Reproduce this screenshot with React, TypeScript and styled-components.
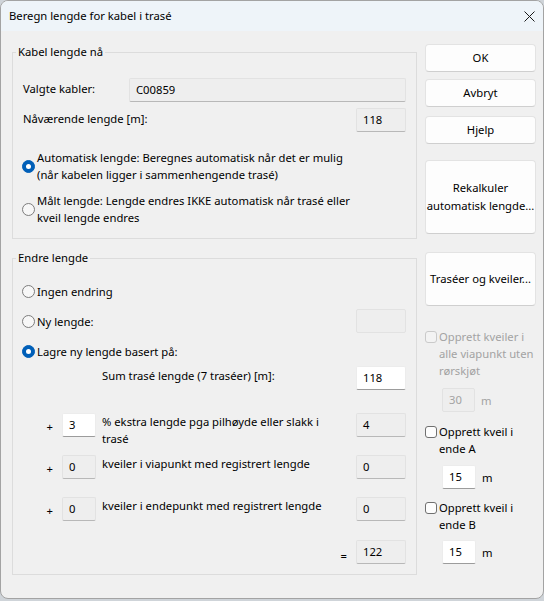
import React from "react";
import styled, { createGlobalStyle } from "styled-components";

const GlobalStyle = createGlobalStyle`
  html, body {
    margin: 0;
    padding: 0;
    background: #cfd4d9;
  }
  body {
    font-family: "Noto Sans", "Open Sans", sans-serif;
    font-size: 11.25px;
    color: #000;
  }
`;

// window chrome

const Window = styled.div`
  width: 544px;
  height: 599px;
  box-sizing: border-box;
  border: 1px solid #a3a3a3;
  border-radius: 8px;
  overflow: hidden;
  background: #f0f0f0;
  display: flex;
  flex-direction: column;
`;

const TitleBar = styled.div`
  flex: none;
  height: 30px;
  display: flex;
  align-items: center;
  justify-content: space-between;
  padding: 0 8px 0 8px;
  background: #eef4f9;
`;

const Title = styled.span`
  line-height: 16px;
`;

const Body = styled.div`
  flex: 1;
  display: flex;
  gap: 8px;
  padding: 13px 6px 0 11px;
`;

const LeftColumn = styled.div`
  width: 405px;
  display: flex;
  flex-direction: column;
`;

const RightColumn = styled.div`
  width: 111px;
  display: flex;
  flex-direction: column;
`;

// group boxes

const Group = styled.fieldset<{ $top?: number }>`
  margin: ${(p) => p.$top ?? 0}px 0 0;
  padding: 0;
  min-width: 0;
  border: 1px solid #dcdcdc;
`;

const Legend = styled.legend`
  margin-left: 3px;
  padding: 0 2px;
  line-height: 16px;
`;

const GroupBody = styled.div<{ $bottom: number }>`
  display: flex;
  flex-direction: column;
  padding: 0 10px ${(p) => p.$bottom}px;
`;

const FormRow = styled.div<{ $top: number }>`
  display: flex;
  align-items: center;
  margin-top: ${(p) => p.$top}px;
`;

const Label = styled.span<{ $w?: number }>`
  ${(p) => (p.$w ? `width: ${p.$w}px; flex: none;` : "flex: 1;")}
  line-height: 16px;
  margin-top: -3px;
`;

const Field = styled.div<{ $w?: number; $kind: "read" | "edit" | "off" }>`
  box-sizing: border-box;
  ${(p) => (p.$w ? `width: ${p.$w}px; flex: none;` : "flex: 1;")}
  height: 24px;
  padding: 3px 6px 0;
  line-height: 16px;
  border-radius: 2px;
  border: 1px solid ${(p) => (p.$kind === "edit" ? "#ececec" : "#e2e2e2")};
  border-bottom-color: ${(p) =>
    p.$kind === "off" ? "#e2e2e2" : p.$kind === "edit" ? "#9c9c9c" : "#b8b8b8"};
  background: ${(p) => (p.$kind === "edit" ? "#ffffff" : "#eeeeee")};
  color: ${(p) => (p.$kind === "off" ? "#a3a3a3" : "#000")};
`;

// radios and checkboxes

const RadioRow = styled.div<{ $top: number }>`
  display: flex;
  align-items: center;
  margin-top: ${(p) => p.$top}px;
  min-height: 24px;
`;

const RadioCircle = styled.span<{ $on?: boolean }>`
  flex: none;
  box-sizing: border-box;
  width: 13px;
  height: 13px;
  margin: 0 2px 0 -1px;
  border-radius: 50%;
  border: 1px solid ${(p) => (p.$on ? "#005fb8" : "#7c7c7c")};
  background: ${(p) => (p.$on ? "#005fb8" : "#f7f7f7")};
  display: flex;
  align-items: center;
  justify-content: center;

  &::after {
    content: "";
    display: ${(p) => (p.$on ? "block" : "none")};
    width: 5px;
    height: 5px;
    border-radius: 50%;
    background: #fff;
  }
`;

const RadioText = styled.span`
  flex: 1;
  line-height: 17px;
`;

const CheckRow = styled.div<{ $top: number; $off?: boolean }>`
  display: flex;
  align-items: flex-start;
  margin-top: ${(p) => p.$top}px;
  color: ${(p) => (p.$off ? "#a3a3a3" : "#000")};
  line-height: 17px;
`;

const CheckBox = styled.span<{ $off?: boolean }>`
  flex: none;
  box-sizing: border-box;
  width: 12px;
  height: 12px;
  margin: 3px 2px 0 0;
  border-radius: 3px;
  border: 1px solid ${(p) => (p.$off ? "#cacaca" : "#707070")};
  background: ${(p) => (p.$off ? "#f3f3f3" : "#fdfdfd")};
`;

const UnitRow = styled.div<{ $top: number; $off?: boolean }>`
  display: flex;
  align-items: center;
  gap: 6px;
  padding-left: 17px;
  margin-top: ${(p) => p.$top}px;
  color: ${(p) => (p.$off ? "#a3a3a3" : "#000")};
`;

// calculation rows

const CalcRow = styled.div<{ $top: number }>`
  display: grid;
  grid-template-columns: 33px 34px 1fr 50px;
  column-gap: 6px;
  align-items: start;
  margin-top: ${(p) => p.$top}px;
`;

const Sign = styled.span<{ $col?: number; $drop?: number }>`
  grid-column: ${(p) => p.$col ?? 1};
  justify-self: end;
  padding: ${(p) => p.$drop ?? 5}px 3px 0 0;
  line-height: 17px;
`;

const CalcText = styled.span<{ $col?: string; $drop?: number }>`
  grid-column: ${(p) => p.$col ?? "3"};
  padding-top: ${(p) => p.$drop ?? 0}px;
  line-height: 17px;
`;

const CalcField = styled(Field)<{ $col: number }>`
  grid-column: ${(p) => p.$col};
`;

// buttons

const Button = styled.button<{ $h: number; $top: number }>`
  box-sizing: border-box;
  width: 111px;
  height: ${(p) => p.$h}px;
  margin-top: ${(p) => p.$top}px;
  padding: 0;
  border: 1px solid #e3e3e3;
  border-bottom-color: #cfcfcf;
  border-radius: 4px;
  background: #fdfdfd;
  font: inherit;
  line-height: 18px;
  color: #000;
  text-align: center;
  white-space: nowrap;
`;

const CloseIcon = () => (
  <svg width="11" height="11" viewBox="0 0 11 11">
    <path d="M0.5 0.5 L10.5 10.5 M10.5 0.5 L0.5 10.5" stroke="#1a1a1a" strokeWidth="1" />
  </svg>
);

const App = () => {
  return (
    <>
      <GlobalStyle />
      <Window>
        <TitleBar>
          <Title>Beregn lengde for kabel i trasé</Title>
          <CloseIcon />
        </TitleBar>
        <Body>
          <LeftColumn>
            <Group>
              <Legend>Kabel lengde nå</Legend>
              <GroupBody $bottom={12}>
                <FormRow $top={18}>
                  <Label $w={106}>Valgte kabler:</Label>
                  <Field $kind="read">C00859</Field>
                </FormRow>
                <FormRow $top={6}>
                  <Label>Nåværende lengde [m]:</Label>
                  <Field $kind="read" $w={50}>
                    118
                  </Field>
                </FormRow>
                <RadioRow $top={17}>
                  <RadioCircle $on />
                  <RadioText>
                    Automatisk lengde: Beregnes automatisk når det er mulig
                    <br />
                    (når kabelen ligger i sammenhengende trasé)
                  </RadioText>
                </RadioRow>
                <RadioRow $top={9}>
                  <RadioCircle />
                  <RadioText>
                    Målt lengde: Lengde endres IKKE automatisk når trasé eller
                    <br />
                    kveil lengde endres
                  </RadioText>
                </RadioRow>
              </GroupBody>
            </Group>

            <Group $top={11}>
              <Legend>Endre lengde</Legend>
              <GroupBody $bottom={10}>
                <RadioRow $top={13}>
                  <RadioCircle />
                  <RadioText>Ingen endring</RadioText>
                </RadioRow>
                <RadioRow $top={6}>
                  <RadioCircle />
                  <RadioText>Ny lengde:</RadioText>
                  <Field $kind="off" $w={50} />
                </RadioRow>
                <RadioRow $top={6}>
                  <RadioCircle $on />
                  <RadioText>Lagre ny lengde basert på:</RadioText>
                </RadioRow>

                <CalcRow $top={3}>
                  <CalcText $col="3" $drop={1}>
                    Sum trasé lengde (7 traséer) [m]:
                  </CalcText>
                  <CalcField $col={4} $kind="edit">
                    118
                  </CalcField>
                </CalcRow>
                <CalcRow $top={23}>
                  <Sign>+</Sign>
                  <CalcField $col={2} $kind="edit">
                    3
                  </CalcField>
                  <CalcText>
                    % ekstra lengde pga pilhøyde eller slakk i
                    <br />
                    trasé
                  </CalcText>
                  <CalcField $col={4} $kind="read">
                    4
                  </CalcField>
                </CalcRow>
                <CalcRow $top={8}>
                  <Sign>+</Sign>
                  <CalcField $col={2} $kind="read">
                    0
                  </CalcField>
                  <CalcText>kveiler i viapunkt med registrert lengde</CalcText>
                  <CalcField $col={4} $kind="read">
                    0
                  </CalcField>
                </CalcRow>
                <CalcRow $top={18}>
                  <Sign>+</Sign>
                  <CalcField $col={2} $kind="read">
                    0
                  </CalcField>
                  <CalcText>kveiler i endepunkt med registrert lengde</CalcText>
                  <CalcField $col={4} $kind="read">
                    0
                  </CalcField>
                </CalcRow>
                <CalcRow $top={19}>
                  <Sign $col={3} $drop={7}>
                    =
                  </Sign>
                  <CalcField $col={4} $kind="read">
                    122
                  </CalcField>
                </CalcRow>
              </GroupBody>
            </Group>
          </LeftColumn>

          <RightColumn>
            <Button $h={28} $top={0}>OK</Button>
            <Button $h={28} $top={7}>Avbryt</Button>
            <Button $h={28} $top={9}>Hjelp</Button>
            <Button $h={74} $top={16}>
              Rekalkuler
              <br />
              automatisk lengde...
            </Button>
            <Button $h={54} $top={18}>
              Traséer og kveiler...
            </Button>

            <CheckRow $top={22} $off>
              <CheckBox $off />
              <span>Opprett kveiler i alle viapunkt uten rørskjøt</span>
            </CheckRow>
            <UnitRow $top={9} $off>
              <Field $kind="off" $w={33}>
                30
              </Field>
              <span>m</span>
            </UnitRow>

            <CheckRow $top={11}>
              <CheckBox />
              <span>Opprett kveil i ende A</span>
            </CheckRow>
            <UnitRow $top={8}>
              <Field $kind="edit" $w={34}>
                15
              </Field>
              <span>m</span>
            </UnitRow>

            <CheckRow $top={10}>
              <CheckBox />
              <span>Opprett kveil i ende B</span>
            </CheckRow>
            <UnitRow $top={7}>
              <Field $kind="edit" $w={34}>
                15
              </Field>
              <span>m</span>
            </UnitRow>
          </RightColumn>
        </Body>
      </Window>
    </>
  );
};

export default App;
